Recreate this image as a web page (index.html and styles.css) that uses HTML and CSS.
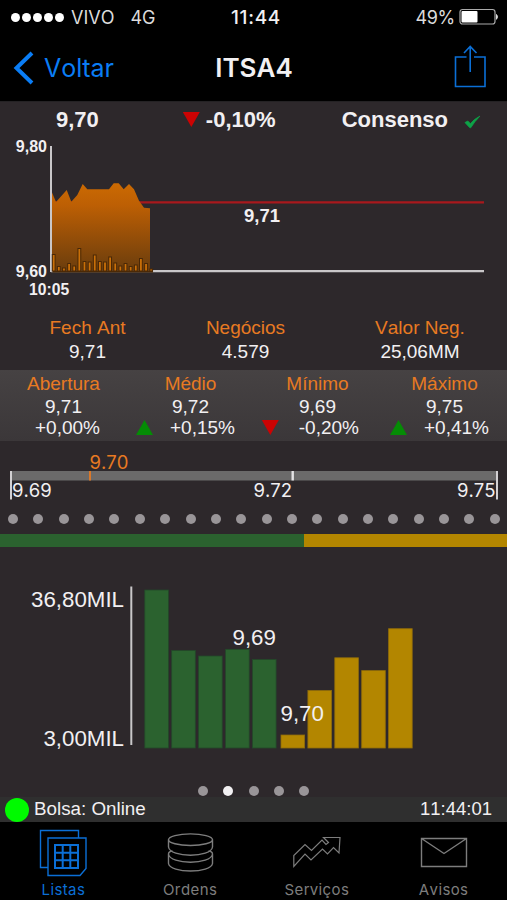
FILE: index.html
```html
<!DOCTYPE html>
<html lang="pt-BR">
<head>
    <meta charset="UTF-8">
    <meta name="viewport" content="width=device-width, initial-scale=1.0">
    <title>ITSA4</title>
    <link rel="stylesheet" href="styles.css">
</head>
<body>
    <div class="status-bar">
        <div class="carrier">
            <span class="signal"><i></i><i></i><i></i><i></i><i></i></span>
            <span class="operator">VIVO</span>
            <span>4G</span>
        </div>
        <div class="clock">11:44</div>
        <div class="battery">
            <span>49%</span>
            <svg width="40" height="18" viewBox="0 0 40 18">
                <rect x="1" y="1.5" width="35" height="14.5" rx="2.5" fill="none" stroke="#aaa" stroke-width="1.2"/>
                <rect x="2.5" y="3" width="16" height="11.5" rx="1" fill="#fff"/>
                <path d="M37.5 6.5q2 2.2 0 4.8z" fill="#ddd" stroke="#ddd"/>
            </svg>
        </div>
    </div>

    <header class="nav-bar">
        <a class="back">
            <svg width="22" height="34" viewBox="0 0 22 34">
                <path d="M20 2 4.5 17 20 32" fill="none" stroke="#0a7df5" stroke-width="4"/>
            </svg>
            <span>Voltar</span>
        </a>
        <h1>ITSA4</h1>
        <a class="share">
            <svg width="34" height="44" viewBox="0 0 34 44">
                <path d="M13.5 13H2.5v29.5h29.5V13h-11M17.2 28V2.5M11 9l6.2-6.5L23.5 9" fill="none" stroke="#0b6fd6" stroke-width="1.6"/>
            </svg>
        </a>
    </header>

    <section class="quote">
        <span class="price">9,70</span>
        <span class="change"><i class="down"></i>-0,10%</span>
        <span class="consensus">Consenso
            <svg width="17" height="14" viewBox="0 0 17 14"><path d="M1 7.6 3.8 6l2.6 2.7Q10 4 15.8 1.2 10.5 6.5 6.7 12.8H5.9z" fill="#0da347" stroke="#0da347" stroke-width=".8"/></svg>
        </span>
    </section>

    <svg class="price-chart" width="507" height="165" viewBox="0 0 507 165">
        <defs>
            <linearGradient id="area" x1="0" y1="0" x2="0" y2="1">
                <stop offset="0" stop-color="#cb6a02"/>
                <stop offset=".25" stop-color="#bd5f04"/>
                <stop offset="1" stop-color="#6b3d0d"/>
            </linearGradient>
        </defs>
        <path d="M51 134.2H484" stroke="#c9c7c9" stroke-width="2.2"/>
        <path d="M51 65.4H484" stroke="#a8181d" stroke-width="2.4"/>
        <path d="M51.7 54.7 56 65 66.7 53 71.3 64.7 77.3 58 82.7 47 87.3 52.3H109L113.7 46.3H118.7L123.7 52.3 129 47 134 52.3 139 63.7 144 70.7 150 71.3V133.5H51.7Z" fill="url(#area)"/>
        <path d="M51 9V135" stroke="#c9c7c9" stroke-width="2"/>
        <path d="M52.5 134.3H153" stroke="#4d2a07" stroke-width="2.2"/>
        <g id="volume" fill="#c96f08" stroke="#4a2806" stroke-width="1"></g>
        <g class="bold">
            <text x="47" y="15" text-anchor="end" font-size="16">9,80</text>
            <text x="47" y="140" text-anchor="end" font-size="16">9,60</text>
            <text x="29" y="158" font-size="15.7">10:05</text>
            <text x="244" y="84.5" font-size="18.5">9,71</text>
        </g>
    </svg>

    <section class="summary">
        <dl><dt>Fech Ant</dt><dd>9,71</dd></dl>
        <dl><dt>Negócios</dt><dd>4.579</dd></dl>
        <dl><dt>Valor Neg.</dt><dd>25,06MM</dd></dl>
    </section>

    <section class="session">
        <dl><dt>Abertura</dt><dd>9,71</dd><dd class="pct flat">+0,00%</dd></dl>
        <dl><dt>Médio</dt><dd>9,72</dd><dd class="pct"><i class="up"></i>+0,15%</dd></dl>
        <dl><dt>Mínimo</dt><dd>9,69</dd><dd class="pct fall"><i class="down"></i>-0,20%</dd></dl>
        <dl><dt>Máximo</dt><dd>9,75</dd><dd class="pct"><i class="up"></i>+0,41%</dd></dl>
    </section>

    <svg class="range" width="507" height="64" viewBox="0 0 507 64">
        <rect x="10" y="30" width="488" height="9.5" fill="#6b6a6a"/>
        <path d="M11 30V58.5M497 30V58.5" stroke="#d2d0d2" stroke-width="2"/>
        <path d="M292.7 30V39.5" stroke="#e4e2e4" stroke-width="2.4"/>
        <path d="M90 30V39.5" stroke="#d9782b" stroke-width="2"/>
        <text x="89.5" y="27.5" fill="#e87a22">9.70</text>
        <text x="12" y="56">9.69</text>
        <text x="292" y="56" text-anchor="end">9.72</text>
        <text x="495.5" y="56" text-anchor="end">9.75</text>
    </svg>

    <div class="dots">
        <i></i><i></i><i></i><i></i><i></i><i></i><i></i><i></i><i></i><i></i>
        <i></i><i></i><i></i><i></i><i></i><i></i><i></i><i></i><i></i><i></i>
    </div>
    <div class="ratio"><div class="buy"></div><div class="sell"></div></div>

    <svg class="depth" width="507" height="228" viewBox="0 0 507 228">
        <path d="M131.3 39.5V198" stroke="#c9c7c9" stroke-width="2"/>
        <g fill="#2b622f" stroke="#23492a" stroke-width=".8">
            <rect x="144.8" y="43" width="23.6" height="158"/>
            <rect x="171.7" y="103.5" width="23.6" height="97.5"/>
            <rect x="198.6" y="109" width="23.6" height="92"/>
            <rect x="225.6" y="102.3" width="23.6" height="98.7"/>
            <rect x="252.5" y="112.5" width="23.6" height="88.5"/>
        </g>
        <g fill="#b38600" stroke="#8f6c0a" stroke-width=".8">
            <rect x="281" y="188" width="23.6" height="13"/>
            <rect x="307.9" y="143.5" width="23.6" height="57.5"/>
            <rect x="334.8" y="110.8" width="23.6" height="90.2"/>
            <rect x="361.7" y="123.6" width="23.6" height="77.4"/>
            <rect x="388.6" y="81.7" width="23.6" height="119.3"/>
        </g>
        <text x="124" y="59.5" text-anchor="end">36,80MIL</text>
        <text x="124" y="199" text-anchor="end">3,00MIL</text>
        <text x="232.5" y="97.5">9,69</text>
        <text x="280.5" y="173.5">9,70</text>
    </svg>

    <div class="pager"><i></i><i class="active"></i><i></i><i></i><i></i></div>

    <div class="market">
        <i class="led"></i>
        <span>Bolsa: Online</span>
        <span class="time">11:44:01</span>
    </div>

    <nav class="tabs">
        <a class="active">
            <svg width="48" height="48" viewBox="0 0 48 48">
                <path d="M8.5 38.5H1.5V1.5H39.5V9M9 9H47V39.5L41 46.5H9Z"/>
                <path d="M16 16H39V39H16ZM16 23.7H39M16 31.3H39M23.7 16V39M31.3 16V39" stroke-width="2"/>
            </svg>
            <span>Listas</span>
        </a>
        <a>
            <svg width="48" height="48" viewBox="0 0 48 48">
                <ellipse cx="24.5" cy="10.7" rx="22" ry="5.8"/>
                <path d="M2.5 10.7V18C4 29 45 29 46.500 18V10.7"/>
                <path d="M6.500 22Q2.500 22.500 2.500 25C4 36 45 36 46.500 25Q46.500 22.500 42.500 22M2.500 25V34.500C4 44.500 45 44.500 46.500 34.500V25"/>
            </svg>
            <span>Ordens</span>
        </a>
        <a>
            <svg width="48" height="48" viewBox="0 0 48 48">
                <path d="M.8 37.5V26.5L12 15.5 18.5 21.5 29 11 33 15.500 35.500 13.500 30.5 8.5H47L46 24 40.5 18.5 34.5 25 29.5 20 18 31 12 25Z" stroke-width="1.2"/>
            </svg>
            <span>Serviços</span>
        </a>
        <a>
            <svg width="48" height="48" viewBox="0 0 48 48">
                <path d="M1.5 9.5H46.5V37.5H1.5ZM1.5 9.5 24 24.5 46.5 9.5"/>
            </svg>
            <span>Avisos</span>
        </a>
    </nav>

    <script>
        // Volume por intervalo, altura em px
        const volumes = [16.5, 4.5, 3, 7.5, 5, 22.5, 9.5, 9, 16, 9.5, 9, 14, 8, 5, 7.5, 4.5, 6, 12.5, 7.5, 2];
        const group = document.getElementById('volume');
        volumes.forEach(function(v, i) {
            const bar = document.createElementNS('http://www.w3.org/2000/svg', 'rect');
            bar.setAttribute('x', 52.3 + i * 5.13);
            bar.setAttribute('y', 134 - v);
            bar.setAttribute('width', 2.8);
            bar.setAttribute('height', v);
            group.appendChild(bar);
        });
    </script>
</body>
</html>
```
FILE: styles.css
```css
* {
    box-sizing: border-box;
}
body {
    margin: 0;
    width: 507px;
    height: 900px;
    overflow: hidden;
    background: #2d282b;
    color: #f2f0f2;
    font-family: "Liberation Sans", Arial, sans-serif;
    font-size: 19px;
    font-kerning: none;
}
svg {
    display: block;
}
svg text {
    fill: #f2f0f2;
}
.status-bar {
    display: grid;
    grid-template-columns: 1fr auto 1fr;
    align-items: center;
    height: 34px;
    padding: 0 8px 0 11px;
    background: #000;
    font-family: Inter, sans-serif;
    font-size: 18px;
}
.carrier {
    display: flex;
    align-items: center;
    color: #dcdcdc;
}
.signal {
    display: flex;
    gap: 2px;
    margin-right: 7px;
}
.signal i {
    width: 9px;
    height: 9px;
    border-radius: 50%;
    background: #fff;
}
.operator {
    margin-right: 16px;
}
.clock {
    padding-left: 2px;
    font-weight: 500;
    font-size: 19px;
    letter-spacing: .7px;
}
.battery {
    display: flex;
    justify-content: flex-end;
    align-items: center;
    gap: 4px;
    color: #dcdcdc;
    letter-spacing: -.3px;
}
.nav-bar {
    display: grid;
    grid-template-columns: 1fr auto 1fr;
    align-items: center;
    height: 68px;
    padding: 0 21px 0 12px;
    background: #000;
    border-bottom: 1px solid #242224;
    font-family: Inter, sans-serif;
}
.nav-bar h1 {
    margin: 0;
    padding-left: 10px;
    font-size: 26px;
    font-weight: 600;
}
.back {
    display: flex;
    align-items: center;
    gap: 10px;
    color: #0a7df5;
    font-size: 25px;
}
.share {
    justify-self: end;
    margin-right: -1px;
    padding-bottom: 4px;
}
.quote {
    display: flex;
    align-items: center;
    height: 35px;
    padding: 0 26px 0 56px;
    font-size: 22px;
    font-weight: bold;
}
.change {
    display: flex;
    align-items: center;
    gap: 6px;
    margin-left: 84px;
}
.consensus {
    display: flex;
    align-items: center;
    gap: 16px;
    margin-left: auto;
}
.consensus svg {
    margin-top: 4px;
}
.up,
.down {
    width: 17px;
    height: 15px;
}
.up {
    background: #058c05;
    clip-path: polygon(50% 0, 100% 100%, 0 100%);
}
.down {
    background: #cc0303;
    clip-path: polygon(0 0, 100% 0, 50% 100%);
}
.bold {
    font-weight: bold;
}
dl,
dd {
    margin: 0;
}
dt {
    color: #e87a22;
}
.summary {
    display: grid;
    grid-template-columns: 175px 141px 1fr;
    height: 68px;
    padding-top: 14px;
    text-align: center;
    line-height: 24px;
}
.summary dl:nth-child(3) {
    padding-left: 17px;
}
.session {
    display: grid;
    grid-template-columns: repeat(4, 127px);
    height: 71px;
    padding-top: 2px;
    background: linear-gradient(#464243, #3b3739);
    text-align: center;
    line-height: 21px;
}
.session dt {
    line-height: 24px;
}
.pct {
    display: flex;
    align-items: center;
    justify-content: flex-end;
    gap: 17px;
    padding-right: 19px;
}
.pct.flat {
    padding-right: 27px;
}
.pct.fall {
    gap: 20px;
    padding-right: 22px;
}
.range {
    font-family: Inter, sans-serif;
    font-size: 18.5px;
}
.range text:first-of-type {
    fill: #e87a22;
}
.dots,
.pager {
    display: flex;
    align-items: center;
}
.dots i,
.pager i {
    width: 10px;
    height: 10px;
    border-radius: 50%;
    background: #999598;
}
.dots {
    justify-content: space-between;
    height: 29px;
    padding: 0 7px 2px 8px;
}
.ratio {
    display: flex;
    height: 13px;
}
.buy {
    width: 304px;
    background: #2b622f;
}
.sell {
    flex: 1;
    background: #b38600;
}
.depth {
    font-size: 22.3px;
}
.pager {
    justify-content: center;
    gap: 15.4px;
    height: 22px;
    padding-top: 10px;
}
.pager .active {
    background: #f2f0f2;
}
.market {
    display: flex;
    align-items: center;
    height: 25px;
    padding: 0 15px 2px 5px;
    background: #2f2f2f;
    font-size: 18.8px;
}
.led {
    width: 24px;
    height: 24px;
    margin: 2px 5px 0 0;
    border-radius: 50%;
    background: #00fb00;
}
.time {
    margin-left: auto;
    font-size: 18.5px;
}
.tabs {
    display: grid;
    grid-template-columns: repeat(4, 1fr);
    justify-items: center;
    height: 78px;
    padding-top: 7px;
    background: #000;
    color: #7d7d7d;
    font-family: Inter, sans-serif;
    font-size: 15px;
    letter-spacing: .4px;
}
.tabs a {
    display: flex;
    flex-direction: column;
    align-items: center;
    gap: 3px;
}
.tabs svg {
    fill: none;
    stroke: currentColor;
    stroke-width: 1.4;
}
.tabs .active {
    color: #0b6fd6;
}
```
